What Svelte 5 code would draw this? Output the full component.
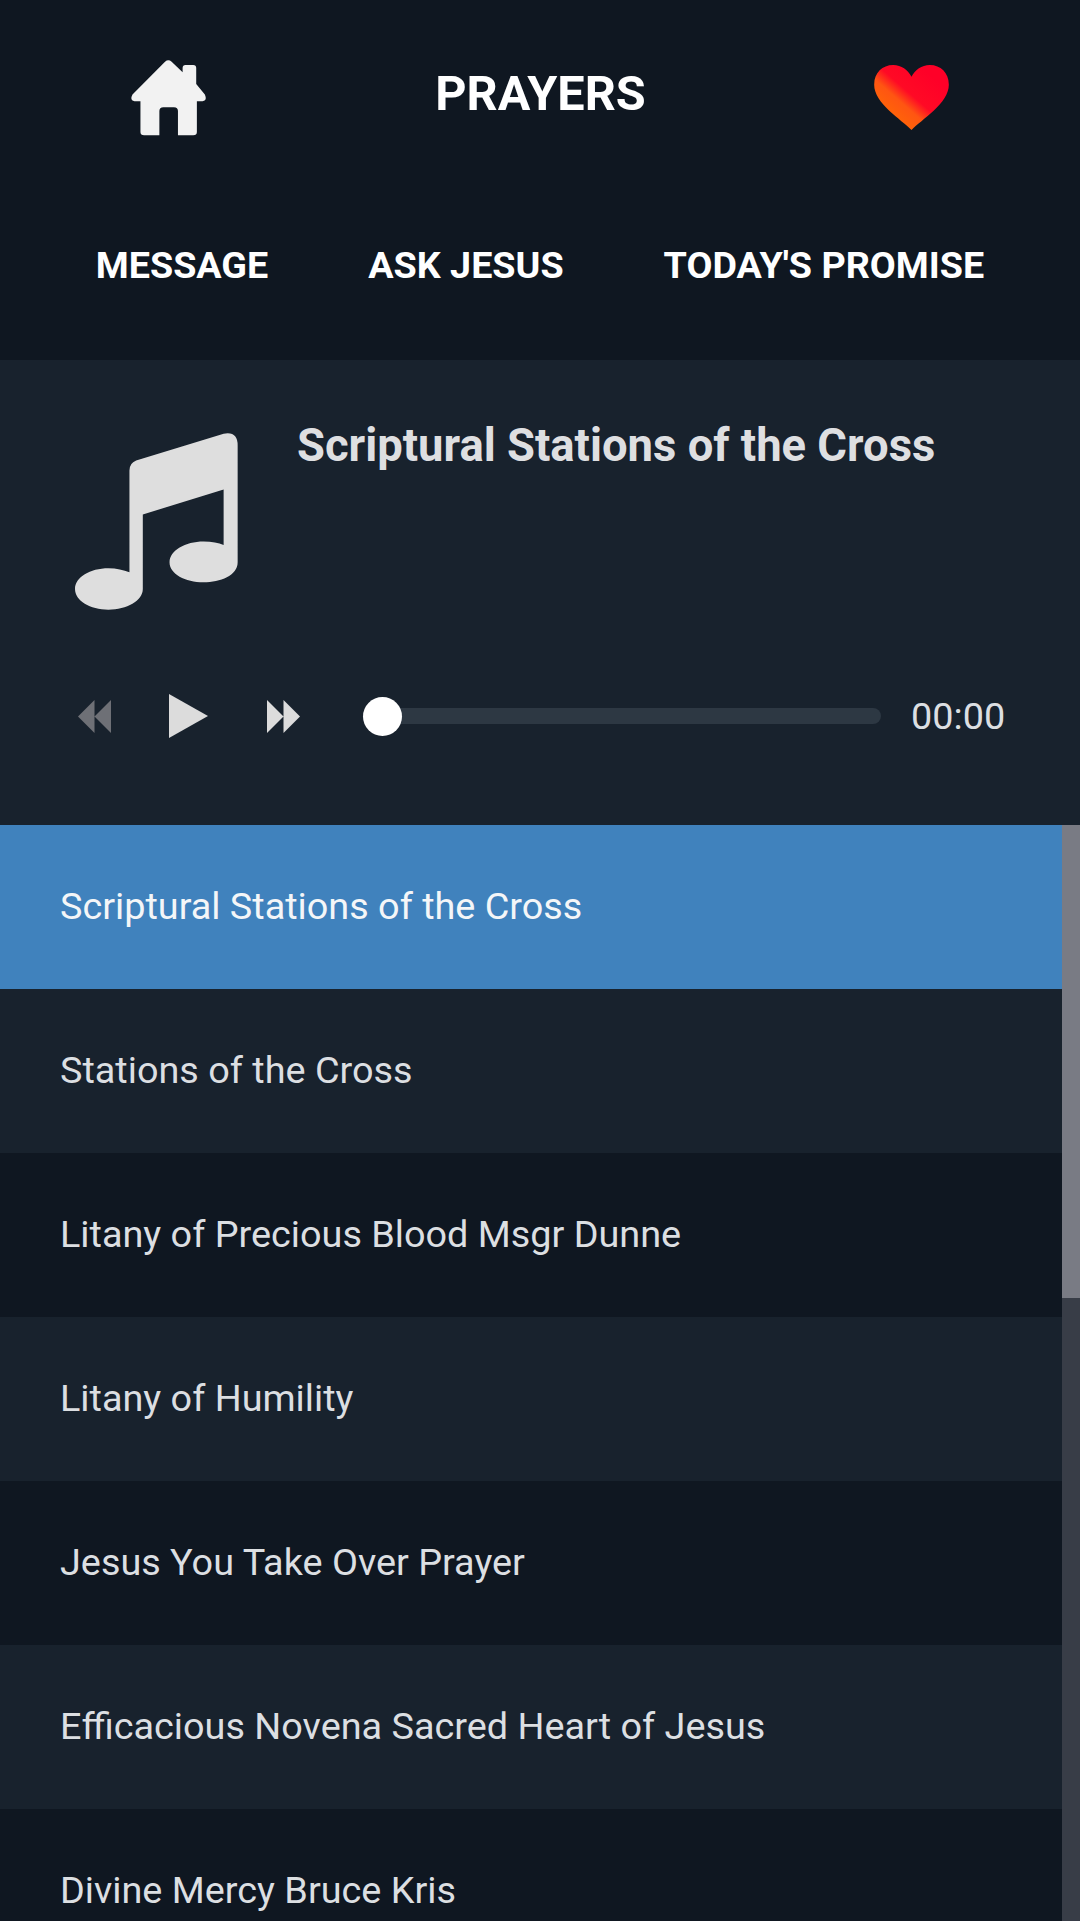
<script lang="ts">
  const navLinks = ["MESSAGE", "ASK JESUS", "TODAY'S PROMISE"];
  const prayers = [
    "Scriptural Stations of the Cross",
    "Stations of the Cross",
    "Litany of Precious Blood Msgr Dunne",
    "Litany of Humility",
    "Jesus You Take Over Prayer",
    "Efficacious Novena Sacred Heart of Jesus",
    "Divine Mercy Bruce Kris",
  ];
  let current = 0;
</script>

<div class="page">
  <header class="top">
    <div class="title-row">
      <svg class="home" viewBox="150 115 231 232" aria-label="Home">
        <path
          d="M255 123 Q265 115 275 123 L308 155 L308 142 Q308 133 317 133 L340 133 Q349 133 349 142 L349 190 L375 222 Q383 240 368 242 L351 242 L351 335 Q351 345 340 345 L294 345 L294 272 Q294 260 282 260 L250 260 Q238 260 238 272 L238 345 L192 345 Q181 345 181 335 L181 242 L163 242 Q148 240 157 222 Z"
          fill="#f2f2f2"
        />
      </svg>
      <h1>PRAYERS</h1>
      <svg class="heart" viewBox="163 133 224 195" aria-label="Favourites">
        <defs>
          <linearGradient id="heart-fill" x1="0.1" y1="0.9" x2="0.8" y2="0.2">
            <stop offset="0" stop-color="#ff7000" />
            <stop offset="0.42" stop-color="#ff5512" />
            <stop offset="0.6" stop-color="#ff0a25" />
            <stop offset="1" stop-color="#ff0028" />
          </linearGradient>
        </defs>
        <path
          d="M275 328 C245 296 163 248 163 192 C163 156 188 133 220 133 C245 133 264 148 275 168 C286 148 305 133 330 133 C362 133 387 156 387 192 C387 248 305 296 275 328 Z"
          fill="url(#heart-fill)"
        />
      </svg>
    </div>
    <nav class="nav">
      {#each navLinks as link}
        <span>{link}</span>
      {/each}
    </nav>
  </header>

  <section class="player">
    <div class="now-playing">
      <svg class="note" viewBox="75 68 488 530" aria-hidden="true">
        <path
          d="M238 180 Q238 158 258 150 L520 70 Q562 62 562 105 L562 455 C562 495 510 515 460 515 C405 515 358 490 358 455 C358 420 405 393 460 393 C485 393 505 397 520 403 L520 237 L278 312 L278 535 C278 570 230 597 175 597 C120 597 75 570 75 535 C75 500 120 473 175 473 C200 473 220 478 238 485 Z"
          fill="#dedede"
        />
      </svg>
      <h2>{prayers[current]}</h2>
    </div>
    <div class="controls">
      <svg class="skip prev" viewBox="0 0 33 33" aria-label="Previous">
        <path d="M0 16.5 L16.5 0 V33 Z M16.5 16.5 L33 0 V33 Z" fill="#6e7076" />
      </svg>
      <svg class="play" viewBox="0 0 39 44" aria-label="Play">
        <path d="M0 0 L39 22 L0 44 Z" fill="#dcdcdc" />
      </svg>
      <svg class="skip next" viewBox="0 0 33 33" aria-label="Next">
        <path d="M0 0 L16.5 16.5 L0 33 Z M16.5 0 L33 16.5 L16.5 33 Z" fill="#dcdcdc" />
      </svg>
      <div class="track">
        <span class="thumb"></span>
      </div>
      <span class="time">00:00</span>
    </div>
  </section>

  <div class="list-wrap">
    <ul class="list">
      {#each prayers as prayer, i}
        <li class:active={i === current} class:alt={i % 2 === 1}>{prayer}</li>
      {/each}
    </ul>
    <div class="scrollbar"><span class="scrollbar__thumb"></span></div>
  </div>
</div>

<style>
  :global(body) {
    margin: 0;
    background: #0f1721;
  }

  .page {
    display: flex;
    flex-direction: column;
    width: 1080px;
    height: 1921px;
    overflow: hidden;
    font-family: Roboto, "Liberation Sans", sans-serif;
    color: #dcdfe2;
  }

  .top {
    height: 360px;
    box-sizing: border-box;
    padding-top: 56px;
    background: #0f1721;
    color: #fff;
  }

  .title-row {
    display: flex;
    align-items: center;
    justify-content: space-between;
    height: 80px;
    padding: 0 131px;
  }

  .home {
    width: 77px;
    height: 77px;
    margin-left: -1px;
    margin-top: 3px;
  }

  .heart {
    width: 75px;
    height: 65px;
    margin-top: 3px;
  }

  h1 {
    margin: 0 0 4px;
    font-size: 48.6px;
    font-weight: 700;
    line-height: 1;
  }

  .nav {
    display: flex;
    justify-content: center;
    gap: 100px;
    margin-top: 105px;
    font-size: 37.7px;
    font-weight: 700;
    line-height: 48px;
  }

  .player {
    height: 465px;
    box-sizing: border-box;
    padding: 73px 75px 0;
    background: #18222d;
  }

  .now-playing {
    display: flex;
    align-items: flex-start;
    height: 176px;
  }

  .note {
    width: 163px;
    height: 177px;
    flex: none;
  }

  h2 {
    margin: -16px 0 0 59px;
    font-size: 45.4px;
    font-weight: 700;
    line-height: 58px;
    white-space: nowrap;
    color: #dedfe1;
  }

  .controls {
    display: flex;
    align-items: center;
    height: 44px;
    margin-top: 85px;
    margin-left: 3px;
  }

  .skip {
    width: 33px;
    height: 33px;
    flex: none;
  }

  .play {
    width: 39px;
    height: 44px;
    flex: none;
    margin-left: 58px;
  }

  .next {
    margin-left: 59px;
  }

  .track {
    position: relative;
    flex: none;
    width: 518px;
    height: 16px;
    margin-left: 63px;
    border-radius: 8px;
    background: #2d3843;
  }

  .thumb {
    position: absolute;
    top: -11.5px;
    left: 0;
    width: 39px;
    height: 39px;
    border-radius: 50%;
    background: #fff;
  }

  .time {
    margin-left: 30px;
    font-size: 37.8px;
    line-height: 44px;
    white-space: nowrap;
    color: #dcdfe2;
  }

  .list-wrap {
    display: flex;
    flex: 1;
    min-height: 0;
  }

  .list {
    flex: 1;
    min-width: 0;
    margin: 0;
    padding: 0;
    list-style: none;
  }

  .list li {
    display: flex;
    align-items: center;
    box-sizing: border-box;
    height: 164px;
    padding-left: 60px;
    padding-bottom: 2px;
    font-size: 37.8px;
    white-space: nowrap;
    background: #0f1721;
  }

  .list li.alt {
    background: #18222d;
  }

  .list li.active {
    background: #4082bd;
    color: #f4f6f8;
  }

  .scrollbar {
    flex: none;
    width: 18px;
    background: #383d47;
  }

  .scrollbar__thumb {
    display: block;
    height: 473px;
    background: #797b84;
  }
</style>
